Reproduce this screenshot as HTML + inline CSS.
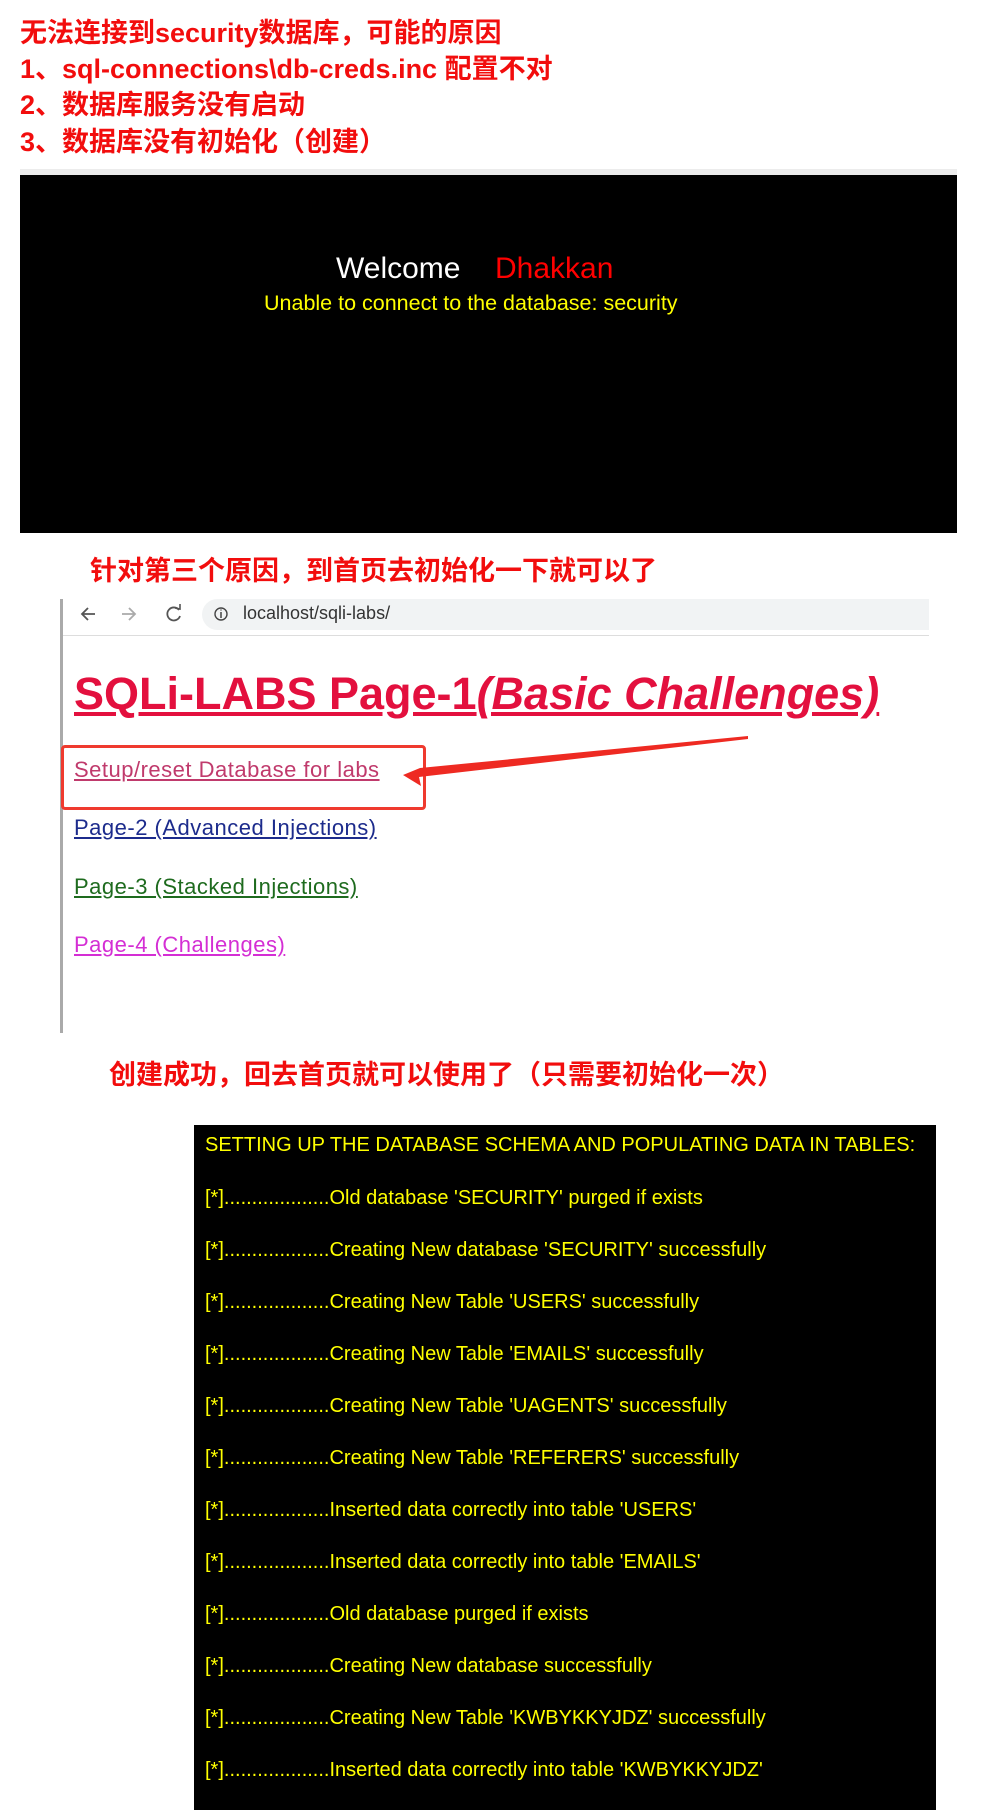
<!DOCTYPE html>
<html><head><meta charset="utf-8"><style>
*{margin:0;padding:0;box-sizing:border-box}
body{width:993px;height:1810px;background:#fff;position:relative;overflow:hidden;font-family:"Liberation Sans","Noto Sans CJK SC",sans-serif}
.a{position:absolute;white-space:nowrap}
.red{color:#f20d0d;font-weight:bold;font-size:27px;font-family:"Liberation Sans","Noto Sans CJK SC",sans-serif}
.y{color:#ffff00;font-size:20px}
a{text-decoration:underline}
</style></head><body>
<div class="a red" style="left:20px;top:11px">无法连接到security数据库，可能的原因</div>
<div class="a red" style="left:20px;top:47px">1、sql-connections\db-creds.inc 配置不对</div>
<div class="a red" style="left:20px;top:83px">2、数据库服务没有启动</div>
<div class="a red" style="left:20px;top:120px">3、数据库没有初始化（创建）</div>

<div class="a" style="left:20px;top:169px;width:937px;height:6px;background:#ececec"></div>
<div class="a" style="left:20px;top:175px;width:937px;height:358px;background:#000"></div>
<div class="a" style="left:336px;top:252px;font-size:30px;color:#fff">Welcome</div>
<div class="a" style="left:495px;top:252px;font-size:30px;color:#f00">Dhakkan</div>
<div class="a y" style="left:264px;top:291px;font-size:21.5px">Unable to connect to the database: security</div>

<div class="a red" style="left:90px;top:549px">针对第三个原因，到首页去初始化一下就可以了</div>

<div class="a" style="left:60px;top:599px;width:3px;height:434px;background:#aaa"></div>
<div class="a" style="left:202px;top:599px;width:727px;height:31px;background:#f1f3f4;border-radius:16px 0 0 16px"></div>
<div class="a" style="left:63px;top:635px;width:866px;height:1px;background:#ddd"></div>
<svg class="a" style="left:78px;top:603px" width="150" height="22" viewBox="0 0 150 22">
<path d="M17 11H5M10 5L4 11L10 17" stroke="#555" stroke-width="1.8" fill="none"/>
<path d="M44 11H56M51 5L57 11L51 17" stroke="#aaa" stroke-width="1.8" fill="none"/>
<path d="M101 7A6.5 6.5 0 1 0 102 13" stroke="#555" stroke-width="1.8" fill="none"/><path d="M97 5L102 6L102 1" stroke="#555" stroke-width="1.6" fill="none"/>
<circle cx="143" cy="11" r="6" stroke="#444" stroke-width="1.4" fill="none"/><path d="M143 9V15M143 6.5V7.5" stroke="#444" stroke-width="1.5"/>
</svg>
<div class="a" style="left:243px;top:603px;font-size:18px;color:#333">localhost/sqli-labs/</div>

<div class="a" style="left:74px;top:668px;font-size:45px;font-weight:bold;color:#e3103e;text-decoration:underline">SQLi-LABS Page-1<i>(Basic Challenges)</i></div>

<div class="a" style="left:61px;top:745px;width:365px;height:65px;border:3px solid #ef3a2e;border-radius:4px"></div>
<svg class="a" style="left:0;top:0" width="993" height="1000"><polygon points="748,736 420,768 403,775 421,786 419,777 748,739" fill="#ee2a22"/></svg>
<a class="a" style="left:74px;top:757px;font-size:22px;letter-spacing:0.5px;color:#c03a6c">Setup/reset Database for labs</a>
<a class="a" style="left:74px;top:815px;font-size:22px;letter-spacing:0.5px;color:#1c2b8c">Page-2 (Advanced Injections)</a>
<a class="a" style="left:74px;top:874px;font-size:22px;letter-spacing:0.5px;color:#1e6b1e">Page-3 (Stacked Injections)</a>
<a class="a" style="left:74px;top:932px;font-size:22px;letter-spacing:0.5px;color:#d42ed4">Page-4 (Challenges)</a>

<div class="a red" style="left:109px;top:1053px">创建成功，回去首页就可以使用了（只需要初始化一次）</div>

<div class="a" style="left:194px;top:1125px;width:742px;height:685px;background:#000"></div>
<div class="a y" style="left:205px;top:1134px">SETTING UP THE DATABASE SCHEMA AND POPULATING DATA IN TABLES:</div>
<div class="a y" style="left:205px;top:1172px;line-height:52px">
[*]...................Old database 'SECURITY' purged if exists<br>
[*]...................Creating New database 'SECURITY' successfully<br>
[*]...................Creating New Table 'USERS' successfully<br>
[*]...................Creating New Table 'EMAILS' successfully<br>
[*]...................Creating New Table 'UAGENTS' successfully<br>
[*]...................Creating New Table 'REFERERS' successfully<br>
[*]...................Inserted data correctly into table 'USERS'<br>
[*]...................Inserted data correctly into table 'EMAILS'<br>
[*]...................Old database purged if exists<br>
[*]...................Creating New database successfully<br>
[*]...................Creating New Table 'KWBYKKYJDZ' successfully<br>
[*]...................Inserted data correctly into table 'KWBYKKYJDZ'
</div>
</body></html>
